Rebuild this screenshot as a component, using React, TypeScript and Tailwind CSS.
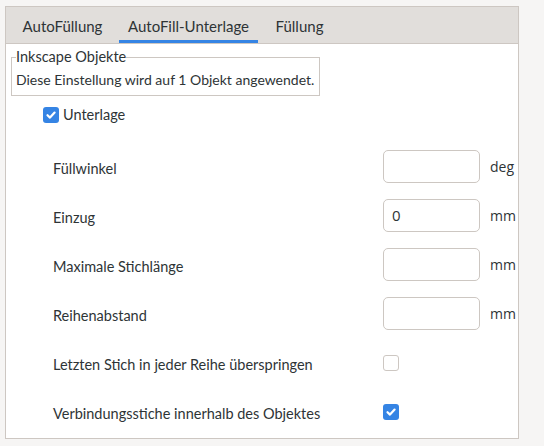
import React from "react"

const FONT = { fontFamily: 'Lato, "Noto Sans", sans-serif' }
const MONO = { fontFamily: '"Open Sans", sans-serif' }

const Check = ({ checked }: { checked: boolean }) =>
  checked ? (
    <span className="flex h-4 w-4 shrink-0 items-center justify-center rounded-[3px] bg-[#3584e4]">
      <svg width="12" height="12" viewBox="0 0 12 12">
        <path d="M2.5 6.2 L5 8.6 L9.6 3.6" fill="none" stroke="white" strokeWidth="2.2" strokeLinecap="round" strokeLinejoin="round" />
      </svg>
    </span>
  ) : (
    <span className="block h-4 w-4 shrink-0 rounded-[3px] border border-[#cdc7c2] bg-white" />
  )

const rows = [
  { label: "Füllwinkel", value: "", unit: "deg" },
  { label: "Einzug", value: "0", unit: "mm" },
  { label: "Maximale Stichlänge", value: "", unit: "mm" },
  { label: "Reihenabstand", value: "", unit: "mm" },
]

const checks = [
  { label: "Letzten Stich in jeder Reihe überspringen", checked: false },
  { label: "Verbindungsstiche innerhalb des Objektes", checked: true },
]

export default function App() {
  return (
    <div className="h-[446px] w-[544px] bg-[#f6f5f4] pl-[5px] pt-[6px] text-[14.5px] text-[#2e3436]" style={FONT}>
      <div className="flex h-[433px] w-[514px] flex-col border border-[#cdc7c2] bg-white">
        {/* tabs */}
        <div className="flex h-[37px] shrink-0 gap-[7px] border-b border-[#cdc7c2] bg-[#e1dedb] pl-[7px] text-[15px]">
          <div className="flex w-[99px] items-center justify-center whitespace-nowrap border-b-[3px] border-transparent pt-[5px]">AutoFüllung</div>
          <div className="flex w-[139px] items-center justify-center whitespace-nowrap border-b-[3px] border-[#3584e4] pt-[5px]">AutoFill-Unterlage</div>
          <div className="flex w-[69px] items-center justify-center whitespace-nowrap border-b-[3px] border-transparent pt-[5px]">Füllung</div>
        </div>

        <div className="flex flex-col pl-[5px]">
          <fieldset className="mt-[5px] w-[309px] min-w-0 border border-[#cdc7c2] px-[4px] pb-[6px]">
            <legend className="p-0 leading-[16px]">Inkscape Objekte</legend>
            <div className="whitespace-nowrap pt-[6px] text-[14px] leading-[18px]">Diese Einstellung wird auf 1 Objekt angewendet.</div>
          </fieldset>

          <label className="ml-[32px] mt-[11px] flex items-center gap-[4px] leading-[16px]">
            <Check checked />
            Unterlage
          </label>

          <div className="mt-[19px] flex flex-col pl-[42px]">
            {rows.map((r) => (
              <div key={r.label} className="flex h-[49px] items-center">
                <span className="w-[330px] pt-[4px]">{r.label}</span>
                <div className="flex h-[33px] w-[97px] items-center rounded-[5px] border border-[#cdc7c2] bg-white px-[8px] text-[15px]" style={MONO}>
                  {r.value}
                </div>
                <span className="ml-[10px] text-[14px]" style={MONO}>{r.unit}</span>
              </div>
            ))}
            {checks.map((c) => (
              <div key={c.label} className="flex h-[49px] items-center">
                <span className="w-[330px] whitespace-nowrap pt-[4px]">{c.label}</span>
                <Check checked={c.checked} />
              </div>
            ))}
          </div>
        </div>
      </div>
    </div>
  )
}
